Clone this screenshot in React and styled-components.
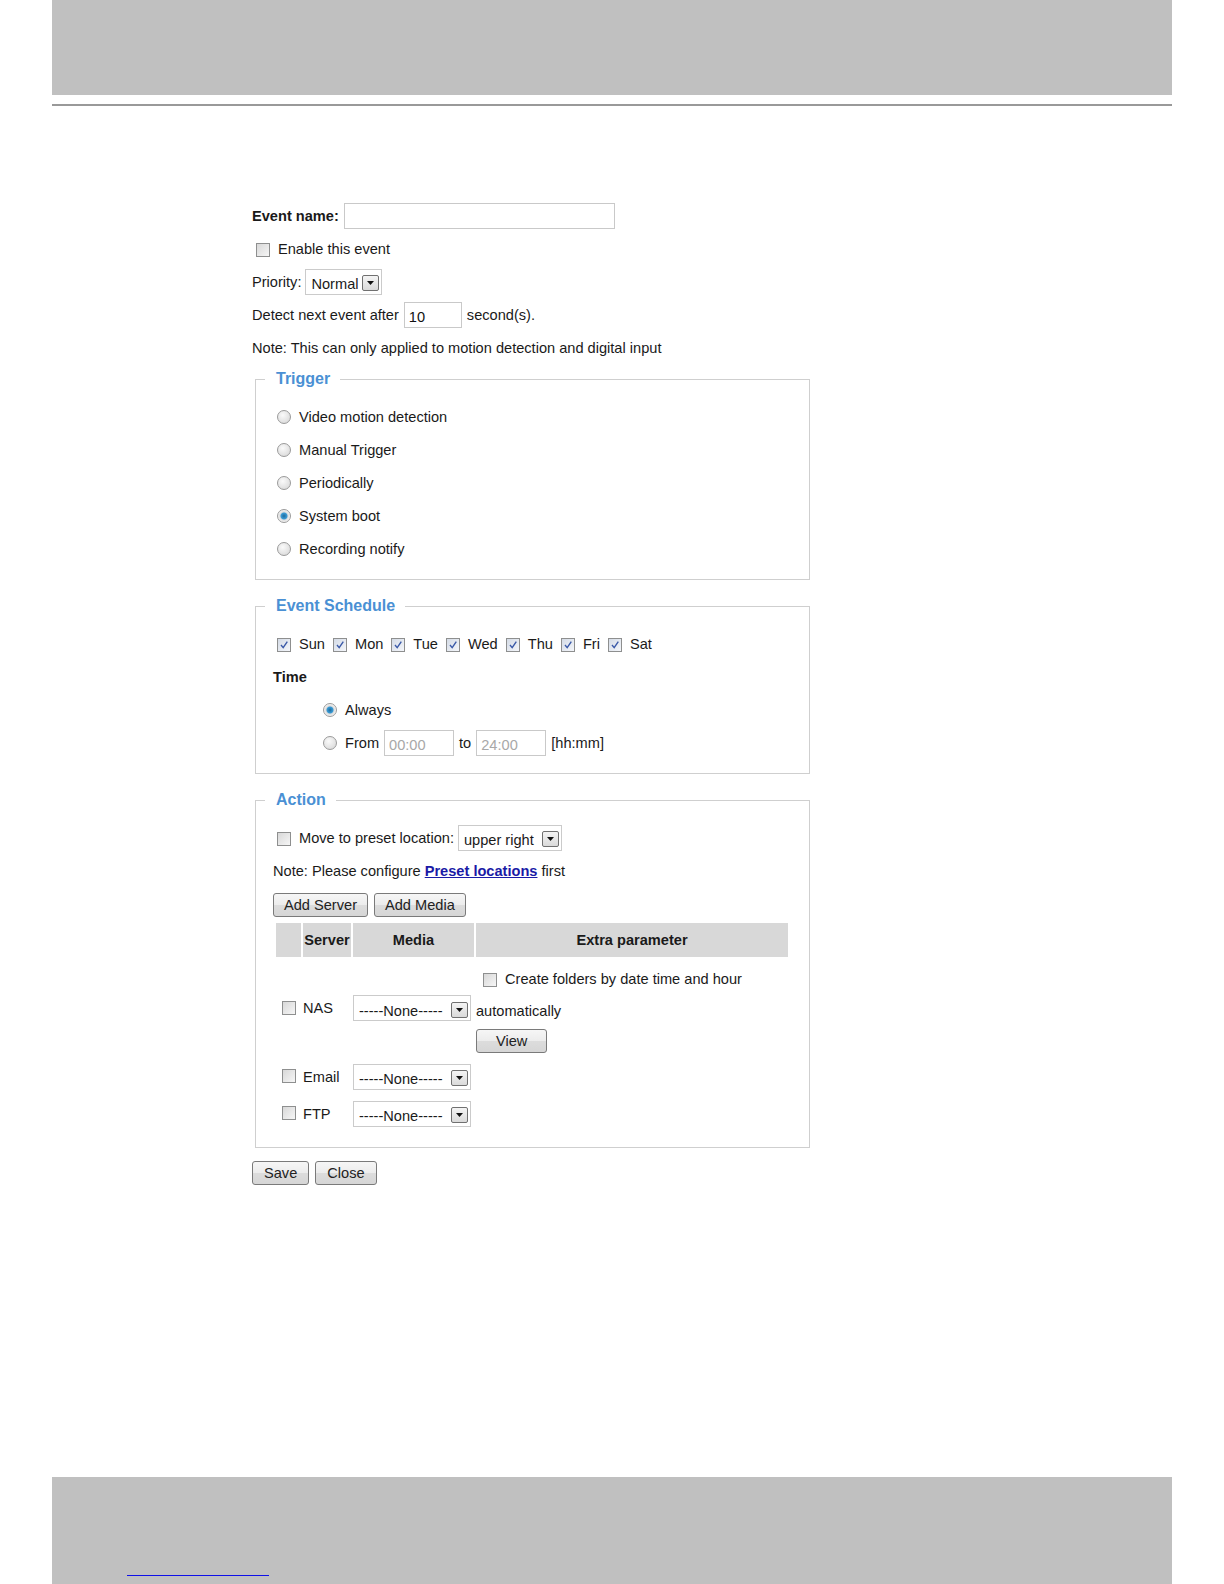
import styled, { createGlobalStyle } from "styled-components";

const Global = createGlobalStyle`
  html, body { margin: 0; padding: 0; background: #fff; }
  body { font-family: "Liberation Sans", Arial, sans-serif; color: #1a1a1a; }
`;

const days = ["Sun", "Mon", "Tue", "Wed", "Thu", "Fri", "Sat"];
const triggers = ["Video motion detection", "Manual Trigger", "Periodically", "System boot", "Recording notify"];

function Check({ checked }) {
    return (
        <Box checked={checked}>
            {checked && (
                <svg width="10" height="10" viewBox="0 0 10 10">
                    <path d="M2 5 L4.2 7.6 L8.3 1.6" fill="none" stroke="#3b5aa8" strokeWidth="1.4" />
                </svg>
            )}
        </Box>
    );
}

function Select({ value, width }) {
    return (
        <SelectBox width={width}>
            <span>{value}</span>
            <Arrow>
                <svg width="7" height="4" viewBox="0 0 7 4"><path d="M0 0 H7 L3.5 4 Z" fill="#111" /></svg>
            </Arrow>
        </SelectBox>
    );
}

export default function App() {
    return (
        <>
            <Global />
            <Page>
                <Header />
                <Rule />
                <Content>
                    <Row>
                        <Bold>Event name:</Bold>
                        <TextInput width={271} />
                    </Row>
                    <Row>
                        <Check />
                        <span>Enable this event</span>
                    </Row>
                    <Row>
                        <span>Priority:</span>
                        <Select value="Normal" width={77} />
                    </Row>
                    <Row>
                        <span>Detect next event after</span>
                        <TextInput width={58} value="10" readOnly />
                        <span>second(s).</span>
                    </Row>
                    <Row>Note: This can only applied to motion detection and digital input</Row>

                    <Group first>
                        <Legend>Trigger</Legend>
                        {triggers.map((t) => (
                            <Row key={t}>
                                <Radio on={t === "System boot"} />
                                <span>{t}</span>
                            </Row>
                        ))}
                    </Group>

                    <Group>
                        <Legend>Event Schedule</Legend>
                        <Row>
                            {days.map((d) => (
                                <Day key={d}>
                                    <Check checked />
                                    <span>{d}</span>
                                </Day>
                            ))}
                        </Row>
                        <Row><Bold>Time</Bold></Row>
                        <TimeBlock>
                            <Row>
                                <Radio on />
                                <span>Always</span>
                            </Row>
                            <Row>
                                <Radio />
                                <span>From</span>
                                <TextInput width={70} value="00:00" readOnly disabled />
                                <span>to</span>
                                <TextInput width={70} value="24:00" readOnly disabled />
                                <span>[hh:mm]</span>
                            </Row>
                        </TimeBlock>
                    </Group>

                    <Group>
                        <Legend>Action</Legend>
                        <Row>
                            <Check />
                            <span>Move to preset location:</span>
                            <Select value="upper right" width={104} />
                        </Row>
                        <Row>
                            <span>
                                Note: Please configure <Link href="#">Preset locations</Link> first
                            </span>
                        </Row>
                        <Buttons top={6}>
                            <Button pad={10}>Add Server</Button>
                            <Button pad={10}>Add Media</Button>
                        </Buttons>
                        <Table>
                            <thead>
                                <tr>
                                    <Th width={25}></Th>
                                    <Th width={48}>Server</Th>
                                    <Th width={121}>Media</Th>
                                    <Th>Extra parameter</Th>
                                </tr>
                            </thead>
                            <tbody>
                                <tr>
                                    <Td center><Check /></Td>
                                    <Td>NAS</Td>
                                    <Td><Select value="-----None-----" width={118} /></Td>
                                    <Td>
                                        <Extra>
                                            <Option>
                                                <Check />
                                                <span>Create folders by date time and hour</span>
                                            </Option>
                                            <span>automatically</span>
                                            <Button pad={19}>View</Button>
                                        </Extra>
                                    </Td>
                                </tr>
                                <tr>
                                    <Td center><Check /></Td>
                                    <Td>Email</Td>
                                    <Td><Select value="-----None-----" width={118} /></Td>
                                    <Td />
                                </tr>
                                <tr>
                                    <Td center><Check /></Td>
                                    <Td>FTP</Td>
                                    <Td><Select value="-----None-----" width={118} /></Td>
                                    <Td />
                                </tr>
                            </tbody>
                        </Table>
                    </Group>

                    <Buttons top={13}>
                        <Button pad={11}>Save</Button>
                        <Button pad={11}>Close</Button>
                    </Buttons>
                </Content>
                <Footer>
                    <FooterLink />
                </Footer>
            </Page>
        </>
    );
}

const Page = styled.div`
    height: 1584px;
    display: flex;
    flex-direction: column;
    padding: 0 52px;
    box-sizing: border-box;
    overflow: hidden;
`;

const Header = styled.div`
    height: 95px;
    background: #c0c0c0;
`;

const Rule = styled.div`
    height: 2px;
    background: #999;
    margin-top: 9px;
`;

const Content = styled.div`
    margin: 93px 0 0 200px;
    width: 558px;
    font-size: 14.6px;
    display: flex;
    flex-direction: column;
`;

const Row = styled.div`
    display: flex;
    align-items: center;
    gap: 4px;
    height: 33px;
    white-space: nowrap;
`;

const Option = styled(Row)`
    height: 28px;
    padding-left: 3px;
`;

const Bold = styled.span`
    font-weight: bold;
`;

const TextInput = styled.input`
    width: ${(p) => p.width}px;
    height: 26px;
    box-sizing: border-box;
    border: 1px solid #c9c9c9;
    padding: 4px 4px 0;
    font: inherit;
    font-size: 14.6px;
    color: #111;
    background: #fff;
    margin: 0 1px;
    &:disabled { color: #a8a8a8; }
`;

const Box = styled.span`
    width: 14px;
    height: 14px;
    box-sizing: border-box;
    border: 1px solid #8e8f8f;
    background: ${(p) =>
        p.checked
            ? "linear-gradient(135deg, #d4dbe6, #f4f6fa)"
            : "linear-gradient(135deg, #d8d8d8, #f6f6f6)"};
    display: inline-flex;
    align-items: center;
    justify-content: center;
    margin: 2px 4px 0 4px;
    flex-shrink: 0;
`;

const Radio = styled.span`
    width: 14px;
    height: 14px;
    border-radius: 50%;
    box-sizing: border-box;
    border: 1px solid #9a9a9a;
    background: ${(p) =>
        p.on
            ? "radial-gradient(circle, #1e6a9c 0, #3a9ad4 3px, #dcdcdc 4px, #f4f4f4 6px)"
            : "radial-gradient(circle at 40% 35%, #fafafa, #d4d4d4)"};
    margin: 0 4px 0 4px;
    flex-shrink: 0;
`;

const SelectBox = styled.div`
    width: ${(p) => p.width}px;
    height: 26px;
    box-sizing: border-box;
    border: 1px solid #cbcbcb;
    display: flex;
    align-items: center;
    justify-content: space-between;
    gap: 3px;
    padding: 3px 2px 0 5px;
    background: #fff;
    span { padding-top: 2px; }
`;

const Arrow = styled.span`
    width: 17px;
    height: 16px;
    box-sizing: border-box;
    border: 1px solid #707070;
    border-radius: 2px;
    background: linear-gradient(#f4f4f4, #dadada);
    display: flex;
    align-items: center;
    justify-content: center;
    padding: 0 !important;
`;

const Group = styled.fieldset`
    margin: ${(p) => (p.first ? "6px" : "17px")} 0 0 3px;
    border: 1px solid #cfcfcf;
    padding: 12px 20px 14px 17px;
    min-width: 0;
`;

const Legend = styled.legend`
    color: #4a90d4;
    font-weight: bold;
    font-size: 16px;
    padding: 0 10px 0 11px;
    margin-left: -8px;
`;

const Day = styled.span`
    display: inline-flex;
    align-items: center;
    gap: 4px;
`;

const TimeBlock = styled.div`
    padding-left: 46px;
    display: flex;
    flex-direction: column;
`;

const Link = styled.a`
    color: #1a1aa6;
    font-weight: bold;
    text-decoration: underline;
`;

const Buttons = styled.div`
    display: flex;
    gap: 6px;
    margin-top: ${(p) => p.top}px;
`;

const Button = styled.button`
    font-family: "Liberation Sans", Arial, sans-serif;
    font-size: 14.6px;
    color: #222;
    height: 24px;
    padding: 0 ${(p) => p.pad}px;
    border: 1px solid #7a7a7a;
    border-radius: 3px;
    background: linear-gradient(#f6f6f6 0, #ececec 50%, #dcdcdc 51%, #d6d6d6 100%);
    align-self: flex-start;
`;

const Table = styled.table`
    margin: 4px 0 0 1px;
    width: 516px;
    border-collapse: separate;
    border-spacing: 2px;
`;

const Th = styled.th`
    background: #d8d8d8;
    height: 34px;
    width: ${(p) => (p.width ? p.width + "px" : "auto")};
    font-weight: bold;
    padding: 0;
`;

const Td = styled.td`
    padding: 0;
    vertical-align: middle;
    text-align: ${(p) => (p.center ? "center" : "left")};
    height: 35px;
`;

const Extra = styled.div`
    display: flex;
    flex-direction: column;
    padding: 6px 0 4px;
    & > span { line-height: 36px; }
`;

const Footer = styled.div`
    margin-top: auto;
    height: 107px;
    background: #c0c0c0;
    display: flex;
    align-items: flex-end;
    padding: 0 0 8px 75px;
    box-sizing: border-box;
`;

const FooterLink = styled.span`
    width: 142px;
    border-bottom: 1px solid #1010e8;
`;
